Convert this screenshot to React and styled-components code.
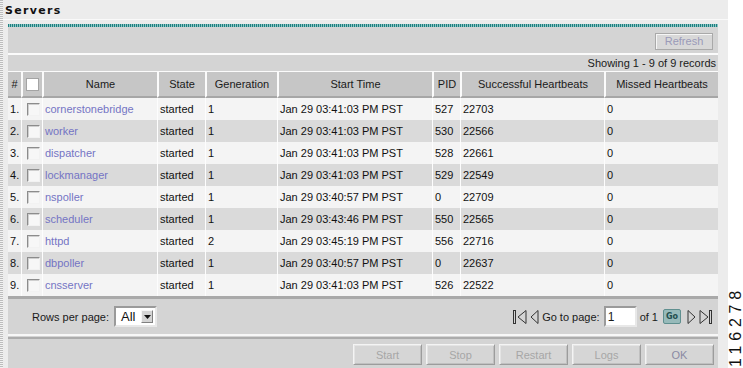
import React from 'react';
import styled, { createGlobalStyle } from 'styled-components';

const servers = [
  ['cornerstonebridge', 'started', 1, 'Jan 29 03:41:03 PM PST', 527, 22703, 0],
  ['worker', 'started', 1, 'Jan 29 03:41:03 PM PST', 530, 22566, 0],
  ['dispatcher', 'started', 1, 'Jan 29 03:41:03 PM PST', 528, 22661, 0],
  ['lockmanager', 'started', 1, 'Jan 29 03:41:03 PM PST', 529, 22549, 0],
  ['nspoller', 'started', 1, 'Jan 29 03:40:57 PM PST', 0, 22709, 0],
  ['scheduler', 'started', 1, 'Jan 29 03:43:46 PM PST', 550, 22565, 0],
  ['httpd', 'started', 2, 'Jan 29 03:45:19 PM PST', 556, 22716, 0],
  ['dbpoller', 'started', 1, 'Jan 29 03:40:57 PM PST', 0, 22637, 0],
  ['cnsserver', 'started', 1, 'Jan 29 03:41:03 PM PST', 526, 22522, 0],
];

const columns = [
  { label: '#', width: 13 },
  { label: 'check', width: 21 },
  { label: 'Name', width: 115 },
  { label: 'State', width: 48 },
  { label: 'Generation', width: 72 },
  { label: 'Start Time', width: 155 },
  { label: 'PID', width: 28 },
  { label: 'Successful Heartbeats', width: 144 },
  { label: 'Missed Heartbeats', width: 114 },
];

const GlobalStyle = createGlobalStyle`
  html, body {
    margin: 0;
    padding: 0;
    background: #fff;
  }
  body {
    font-family: 'Liberation Sans', Arial, sans-serif;
    font-size: 11px;
    color: #1a1a1a;
  }
`;

const Page = styled.div`
  display: flex;
  width: 743px;
  height: 368px;
  overflow: hidden;
`;

const Main = styled.div`
  width: 728px;
  flex: none;
  background:
    repeating-linear-gradient(180deg, #bdbdbd 0 1px, #f2f2f2 1px 2px) left top / 3px 100% no-repeat,
    #ececec;
`;

const Title = styled.h1`
  margin: 0;
  height: 20px;
  padding: 5px 0 0 5px;
  box-sizing: border-box;
  border-bottom: 1px solid #f9f9f9;
  font-family: 'DejaVu Sans', sans-serif;
  font-size: 11px;
  font-weight: bold;
  letter-spacing: 1.3px;
  line-height: 11px;
  color: #111;
`;

const Panel = styled.div`
  margin: 4px 0 0 8px;
  width: 710px;
  background: #d4d4d4;
`;

const TealBar = styled.div`
  height: 3px;
  background: repeating-linear-gradient(90deg, #1d7f7f 0 1px, #8cc4c4 1px 2px);
`;

const Toolbar = styled.div`
  height: 26px;
  display: flex;
  align-items: center;
  justify-content: flex-end;
  padding-right: 5px;
  border-bottom: 2px solid #fbfbfb;
`;

const RefreshButton = styled.button`
  width: 58px;
  height: 17px;
  margin-top: 2px;
  padding: 0;
  background: #d8d8d8;
  border: 1px solid #a9a9a9;
  box-shadow: inset 1px 1px 0 #f6f6f6;
  font-family: 'Liberation Sans', Arial, sans-serif;
  font-size: 11px;
  color: #9a9ab8;
`;

const Summary = styled.div`
  height: 16px;
  line-height: 16px;
  text-align: right;
  padding-right: 2px;
  border-bottom: 1px solid #fbfbfb;
`;

const Grid = styled.table`
  width: 710px;
  table-layout: fixed;
  border-collapse: separate;
  border-spacing: 0;
  font-size: 11px;
`;

const HeadCell = styled.th`
  height: 24px;
  padding: 0;
  background: #c6c6c6;
  border-left: ${(p) => (p.$first ? 'none' : '2px solid #fbfbfb')};
  border-bottom: 2px solid #a6a6a6;
  font-weight: normal;
  text-align: center;
  color: #1a1a1a;
  white-space: nowrap;
  overflow: hidden;
`;

const Row = styled.tr`
  height: 22px;
  background: ${(p) => (p.$odd ? '#dadada' : '#f4f4f4')};
`;

const Cell = styled.td`
  padding: 0 0 0 2px;
  border-left: ${(p) => (p.$first ? 'none' : '1px solid #fdfdfd')};
  text-align: ${(p) => (p.$center ? 'center' : 'left')};
  white-space: nowrap;
  overflow: hidden;
  color: #111;
`;

const Check = styled.span`
  display: inline-block;
  vertical-align: middle;
  width: 13px;
  height: 13px;
  box-sizing: border-box;
  background: ${(p) => (p.$head ? '#fff' : '#f7f7f7')};
  border: 1px solid;
  border-color: ${(p) => (p.$head ? '#a4a4a4' : '#8c8c8c #f2f2f2 #f2f2f2 #8c8c8c')};
  box-shadow: ${(p) => (p.$head ? 'none' : 'inset 1px 1px 0 #cfcfcf')};
`;

const NameLink = styled.a`
  color: #7474c4;
  text-decoration: none;
`;

const Footer = styled.div`
  height: 35px;
  display: flex;
  align-items: center;
  justify-content: space-between;
  padding: 0 5px 0 24px;
  border-top: 3px solid #a9a9a9;
  border-bottom: 2px solid #f7f7f7;
`;

const RowsPer = styled.label`
  display: flex;
  align-items: center;
  gap: 5px;
`;

const Select = styled.span`
  display: inline-flex;
  align-items: center;
  justify-content: space-between;
  width: 43px;
  height: 21px;
  box-sizing: border-box;
  padding: 0 2px 0 5px;
  background: #fff;
  border: 2px solid;
  border-color: #9a9a9a #e8e8e8 #e8e8e8 #9a9a9a;
  font-size: 13px;
  color: #111;
`;

const SelectArrow = styled.span`
  width: 12px;
  height: 13px;
  box-sizing: border-box;
  display: flex;
  align-items: center;
  justify-content: center;
  background: #d4d4d4;
  border: 1px solid;
  border-color: #f6f6f6 #808080 #808080 #f6f6f6;
`;

const Pager = styled.div`
  display: flex;
  align-items: center;
  gap: 3px;
`;

const PageInput = styled.span`
  width: 33px;
  height: 21px;
  margin-left: 1px;
  box-sizing: border-box;
  padding: 2px 0 0 2px;
  background: #fff;
  border: 2px solid;
  border-color: #9a9a9a #e8e8e8 #e8e8e8 #9a9a9a;
  font-size: 12px;
  line-height: 14px;
`;

const GoButton = styled.span`
  width: 18px;
  height: 15px;
  margin: 0 3px 0 2px;
  box-sizing: border-box;
  display: flex;
  align-items: center;
  justify-content: center;
  background: #97baba;
  border: 1px solid #5f8f8f;
  border-radius: 2px;
  font-family: 'DejaVu Sans', sans-serif;
  font-size: 8px;
  font-weight: bold;
  color: #234f4f;
`;

const ButtonBar = styled.div`
  margin-top: 1px;
  border-top: 2px solid #acacac;
  display: flex;
  justify-content: flex-end;
  gap: 4px;
  padding: 5px 4px 10px 0;
`;

const ActionButton = styled.button`
  width: 69px;
  height: 21px;
  padding: 0;
  background: #d6d6d6;
  border: 1px solid;
  border-color: #f4f4f4 #9c9c9c #9c9c9c #f4f4f4;
  box-shadow: inset 1px 1px 0 #e4e4e4, inset -1px -1px 0 #c0c0c0;
  font-family: 'Liberation Sans', Arial, sans-serif;
  font-size: 11px;
  color: ${(p) => (p.$primary ? '#8a8aa4' : '#a6a6a6')};
`;

const Margin = styled.div`
  flex: 1;
  display: flex;
  flex-direction: column;
  justify-content: flex-end;
  align-items: center;
  padding-bottom: 1px;
  background: #fff;
`;

const FigureId = styled.span`
  writing-mode: vertical-rl;
  transform: rotate(180deg);
  font-family: 'Liberation Sans', Arial, sans-serif;
  font-size: 16px;
  line-height: 14px;
  letter-spacing: 4.8px;
  color: #111;
`;

const Arrow = ({ dir, bar }) => {
  const w = bar ? 14 : 9;
  const left = dir === 'left';
  const tri = left
    ? bar ? '13,1.5 5,8 13,14.5' : '8,1.5 1,8 8,14.5'
    : bar ? '1,1.5 9,8 1,14.5' : '1,1.5 8,8 1,14.5';
  return (
    <svg width={w} height="16" viewBox={`0 0 ${w} 16`}>
      <polygon points={tri} fill="none" stroke="#333" strokeWidth="1" />
      {bar && (
        <rect x={left ? 0.5 : 10.5} y="1.5" width="2" height="13" fill="none" stroke="#333" strokeWidth="1" />
      )}
    </svg>
  );
};

const App = () => {
  return (
    <Page>
      <GlobalStyle />
      <Main>
        <Title>Servers</Title>
        <Panel>
          <TealBar />
          <Toolbar>
            <RefreshButton>Refresh</RefreshButton>
          </Toolbar>
          <Summary>Showing 1 - 9 of 9 records</Summary>

          <Grid>
            <colgroup>
              {columns.map((c) => (
                <col key={c.label} style={{ width: c.width }} />
              ))}
            </colgroup>
            <thead>
              <tr>
                {columns.map((c, i) => (
                  <HeadCell key={c.label} $first={i === 0}>
                    {c.label === 'check' ? <Check $head /> : c.label}
                  </HeadCell>
                ))}
              </tr>
            </thead>
            <tbody>
              {servers.map((s, i) => (
                <Row key={s[0]} $odd={i % 2 === 1}>
                  <Cell $first>{i + 1}.</Cell>
                  <Cell $center>
                    <Check />
                  </Cell>
                  <Cell>
                    <NameLink href="#">{s[0]}</NameLink>
                  </Cell>
                  <Cell>{s[1]}</Cell>
                  <Cell>{s[2]}</Cell>
                  <Cell>{s[3]}</Cell>
                  <Cell>{s[4]}</Cell>
                  <Cell>{s[5]}</Cell>
                  <Cell>{s[6]}</Cell>
                </Row>
              ))}
            </tbody>
          </Grid>

          <Footer>
            <RowsPer>
              Rows per page:
              <Select>
                All
                <SelectArrow>
                  <svg width="7" height="4" viewBox="0 0 7 4">
                    <polygon points="0,0 7,0 3.5,4" fill="#111" />
                  </svg>
                </SelectArrow>
              </Select>
            </RowsPer>
            <Pager>
              <Arrow dir="left" bar />
              <Arrow dir="left" />
              <span>Go to page:</span>
              <PageInput>1</PageInput>
              <span>of 1</span>
              <GoButton>Go</GoButton>
              <Arrow dir="right" />
              <Arrow dir="right" bar />
            </Pager>
          </Footer>

          <ButtonBar>
            <ActionButton>Start</ActionButton>
            <ActionButton>Stop</ActionButton>
            <ActionButton>Restart</ActionButton>
            <ActionButton>Logs</ActionButton>
            <ActionButton $primary>OK</ActionButton>
          </ButtonBar>
        </Panel>
      </Main>
      <Margin>
        <FigureId>116278</FigureId>
      </Margin>
    </Page>
  );
};

export default App;
